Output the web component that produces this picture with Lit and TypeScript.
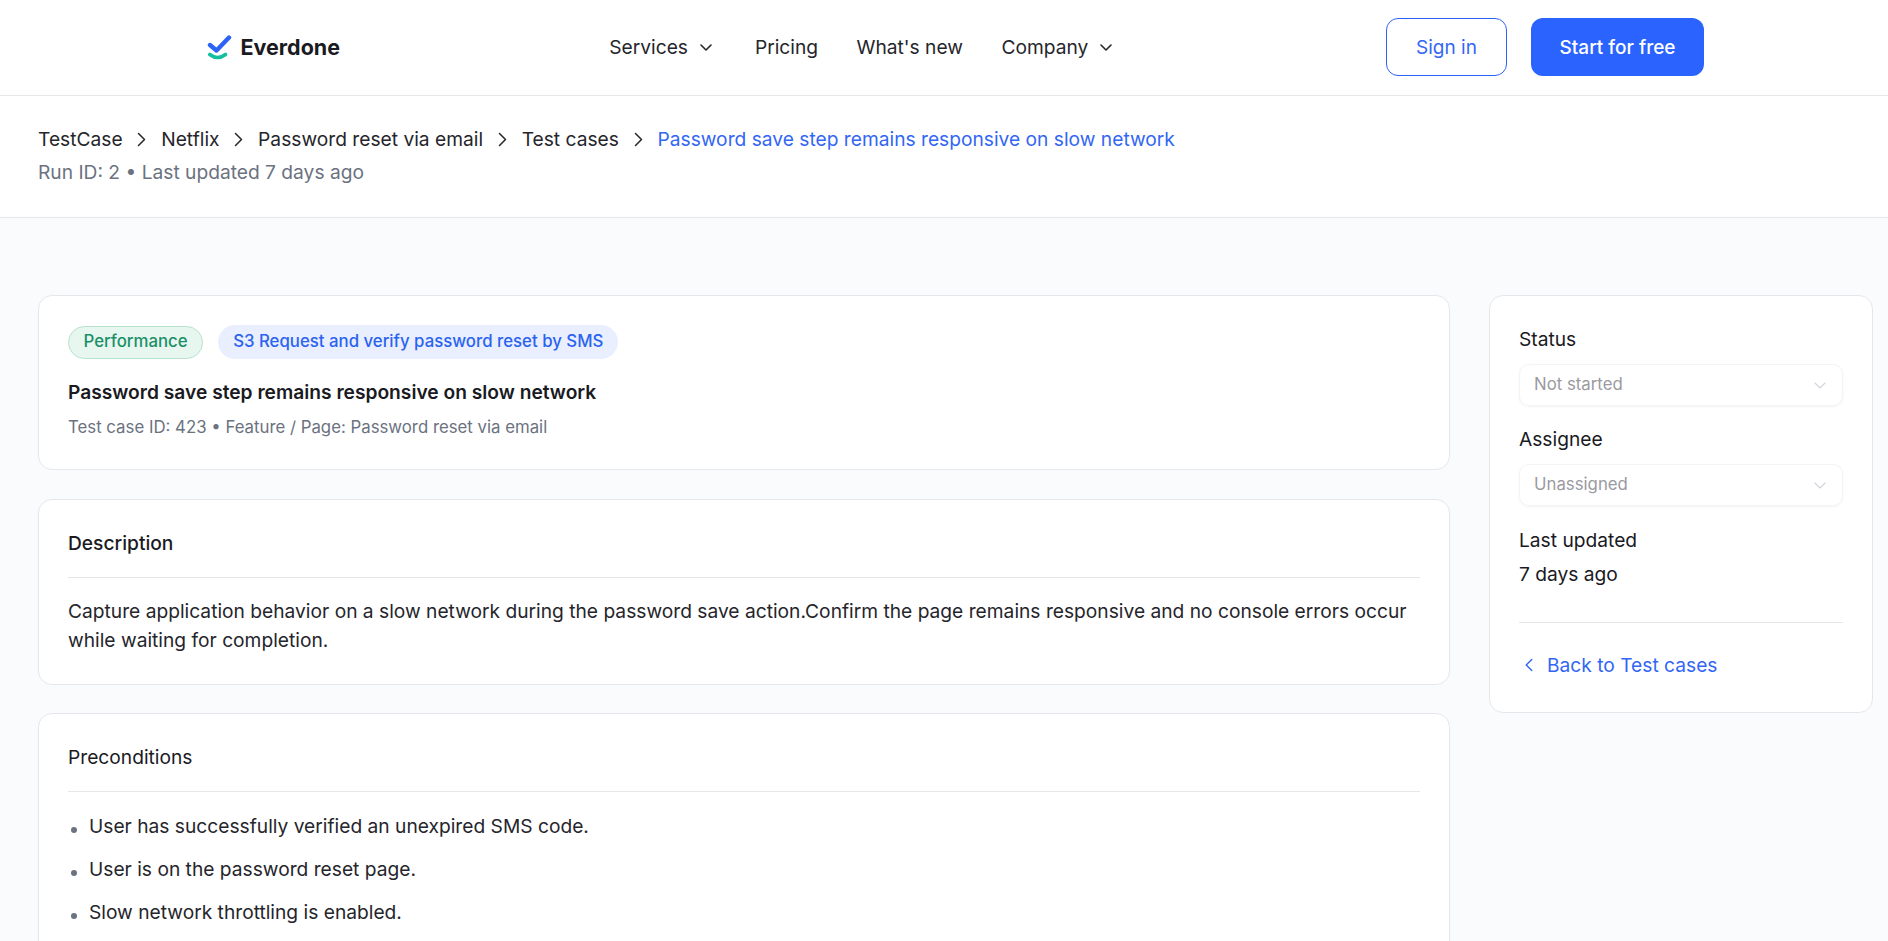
import { LitElement, html, css, svg } from "lit";
import { customElement } from "lit/decorators.js";

const navChevron = svg`<path d="M3 6 L8 11 L13 6" fill="none" stroke="currentColor" stroke-width="1.6" stroke-linecap="round" stroke-linejoin="round"/>`;
const selectChevron = svg`<path d="M2 5 L7 10 L12 5" fill="none" stroke="currentColor" stroke-width="1.1" stroke-linecap="round" stroke-linejoin="round"/>`;
const chevronRight = svg`<path d="M4.5 1.5 L10.5 7.5 L4.5 13.5" fill="none" stroke="currentColor" stroke-width="1.5" stroke-linecap="round" stroke-linejoin="round"/>`;

@customElement("app-root")
export class AppRoot extends LitElement {
  static styles = css`
    :host {
      display: block;
      height: 941px;
      overflow: hidden;
      background: #f9fbfc;
      color: #1a1a1f;
      font-family: Inter, "Liberation Sans", sans-serif;
      font-size: 19.2px;
      line-height: 1.5;
    }

    .topbar {
      display: flex;
      align-items: center;
      justify-content: space-between;
      height: 95px;
      padding: 0 184px 0 207px;
      background: #fff;
      border-bottom: 1px solid #e5e7eb;
    }

    .logo {
      display: flex;
      align-items: center;
      gap: 8.5px;
      font-size: 21.5px;
      font-weight: 700;
      color: #1a1a1f;
    }

    .logo span {
      padding-bottom: 1px;
    }

    .nav {
      display: flex;
      align-items: center;
      gap: 38.5px;
      color: #25252b;
    }

    .nav-item {
      display: flex;
      align-items: center;
      gap: 10px;
    }

    .nav-item.menu {
      padding-right: 2.4px;
    }

    .nav-item svg {
      width: 16px;
      height: 16px;
      margin-top: -1px;
    }

    .actions {
      display: flex;
      gap: 24px;
      margin-bottom: 1px;
    }

    .btn {
      display: flex;
      align-items: center;
      justify-content: center;
      height: 58px;
      padding-top: 2px;
      box-sizing: border-box;
      border-radius: 12px;
      font-size: 19px;
    }

    .btn.outline {
      width: 121px;
      border: 1px solid #2d62f6;
      color: #3366f5;
      background: #fff;
    }

    .btn.solid {
      width: 173px;
      background: #2b63ff;
      color: #fff;
      font-weight: 500;
    }

    .crumbs {
      box-sizing: border-box;
      height: 122px;
      padding: 27px 38px 0;
      background: #fff;
      border-bottom: 1px solid #e5e7eb;
    }

    .trail {
      display: flex;
      align-items: center;
      gap: 11.8px;
      height: 32px;
      color: #25252b;
    }

    .trail svg {
      width: 15px;
      height: 15px;
    }

    .trail .current {
      color: #3366f5;
    }

    .run {
      margin-top: 3px;
      color: #6b7280;
    }

    .page {
      display: grid;
      grid-template-columns: 1412px 384px;
      column-gap: 39px;
      align-items: start;
      padding: 77px 15px 0 38px;
    }

    .column {
      display: flex;
      flex-direction: column;
      gap: 29px;
    }

    .card {
      box-sizing: border-box;
      background: #fff;
      border: 1px solid #e5e7eb;
      border-radius: 14px;
      padding: 0 29px;
    }

    .summary {
      height: 175px;
      padding-top: 29px;
    }

    .tags {
      display: flex;
      align-items: center;
      gap: 15px;
    }

    .tag {
      display: flex;
      align-items: center;
      box-sizing: border-box;
      height: 33px;
      font-size: 16.8px;
      font-weight: 500;
      border-radius: 17px;
    }

    .tag.green {
      padding: 0 14.5px;
      background: #e8f6f0;
      border: 1px solid #b7e2cf;
      color: #1a9068;
    }

    .tag.blue {
      height: 34px;
      padding: 0 15px;
      background: #e9effe;
      color: #2b63f0;
    }

    .title {
      margin-top: 18.5px;
      font-weight: 600;
      color: #1a1a1f;
    }

    .meta {
      margin-top: 8.5px;
      font-size: 16.8px;
      color: #6b7280;
    }

    .description {
      height: 186px;
    }

    .heading {
      display: flex;
      align-items: center;
      box-sizing: border-box;
      height: 78px;
      padding-top: 10px;
      font-weight: 500;
      border-bottom: 1px solid #e5e7eb;
    }

    .description p {
      margin: 0;
      padding-top: 19px;
      line-height: 29px;
      color: #25252b;
    }

    .preconditions {
      height: 400px;
      margin-top: -1px;
    }

    .preconditions .heading {
      font-weight: 400;
    }

    .list {
      margin: 0;
      padding: 20px 0 0;
      list-style: none;
    }

    .list li {
      display: flex;
      align-items: baseline;
      height: 43px;
      line-height: 29px;
      color: #25252b;
    }

    .dot {
      flex: none;
      width: 6px;
      height: 6px;
      margin: 0 12px 0 3px;
      border-radius: 50%;
      background: #6b7280;
    }

    .side {
      height: 418px;
      padding-top: 27px;
    }

    .label {
      line-height: 33px;
      color: #1a1a1f;
    }

    .select {
      display: flex;
      align-items: center;
      justify-content: space-between;
      box-sizing: border-box;
      height: 42px;
      margin: 8px 0 17px;
      padding: 0 15px 0 14px;
      font-size: 16.8px;
      color: #9a9a9f;
      border: 1px solid #f3f4f6;
      border-radius: 10px;
      box-shadow: 0 1px 3px rgba(0, 0, 0, 0.05);
    }

    .select.last {
      margin-bottom: 18px;
    }

    .select svg {
      width: 14px;
      height: 14px;
      color: #d1d5db;
    }

    .updated {
      line-height: 34px;
    }

    .back {
      display: flex;
      align-items: center;
      gap: 11px;
      margin-top: 31px;
      padding-top: 28px;
      border-top: 1px solid #e5e7eb;
      color: #3366f5;
    }

    .back svg {
      width: 14px;
      height: 14px;
      margin-left: 3px;
      transform: scaleX(-1);
    }
  `;

  render() {
    return html`
      <header class="topbar">
        <div class="logo">
          <svg width="25" height="26" viewBox="0 0 25 26">
            <path d="M3 10 L9.5 15.5 L22 2.5" fill="none" stroke="#2d62f6" stroke-width="4.4" stroke-linecap="round" stroke-linejoin="round"/>
            <path d="M2.8 19.5 Q10.5 25.5 18.5 19.5" fill="none" stroke="#14bfa0" stroke-width="3.6" stroke-linecap="round"/>
          </svg>
          <span>Everdone</span>
        </div>
        <nav class="nav">
          <div class="nav-item menu">Services <svg viewBox="0 0 16 16">${navChevron}</svg></div>
          <div class="nav-item">Pricing</div>
          <div class="nav-item">What's new</div>
          <div class="nav-item menu">Company <svg viewBox="0 0 16 16">${navChevron}</svg></div>
        </nav>
        <div class="actions">
          <div class="btn outline">Sign in</div>
          <div class="btn solid">Start for free</div>
        </div>
      </header>

      <section class="crumbs">
        <div class="trail">
          <span>TestCase</span><svg viewBox="0 0 15 15">${chevronRight}</svg>
          <span>Netflix</span><svg viewBox="0 0 15 15">${chevronRight}</svg>
          <span>Password reset via email</span><svg viewBox="0 0 15 15">${chevronRight}</svg>
          <span>Test cases</span><svg viewBox="0 0 15 15">${chevronRight}</svg>
          <span class="current">Password save step remains responsive on slow network</span>
        </div>
        <div class="run">Run ID: 2 • Last updated 7 days ago</div>
      </section>

      <main class="page">
        <div class="column">
          <section class="card summary">
            <div class="tags">
              <span class="tag green">Performance</span>
              <span class="tag blue">S3 Request and verify password reset by SMS</span>
            </div>
            <div class="title">Password save step remains responsive on slow network</div>
            <div class="meta">Test case ID: 423 • Feature / Page: Password reset via email</div>
          </section>

          <section class="card description">
            <div class="heading">Description</div>
            <p>Capture application behavior on a slow network during the password save action.Confirm the page remains responsive and no console errors occur while waiting for completion.</p>
          </section>

          <section class="card preconditions">
            <div class="heading">Preconditions</div>
            <ul class="list">
              <li><span class="dot"></span>User has successfully verified an unexpired SMS code.</li>
              <li><span class="dot"></span>User is on the password reset page.</li>
              <li><span class="dot"></span>Slow network throttling is enabled.</li>
            </ul>
          </section>
        </div>

        <aside class="card side">
          <div class="label">Status</div>
          <div class="select">Not started <svg viewBox="0 0 14 14">${selectChevron}</svg></div>
          <div class="label">Assignee</div>
          <div class="select last">Unassigned <svg viewBox="0 0 14 14">${selectChevron}</svg></div>
          <div class="label">Last updated</div>
          <div class="updated">7 days ago</div>
          <div class="back"><svg viewBox="0 0 15 15">${chevronRight}</svg><span>Back to Test cases</span></div>
        </aside>
      </main>
    `;
  }
}
